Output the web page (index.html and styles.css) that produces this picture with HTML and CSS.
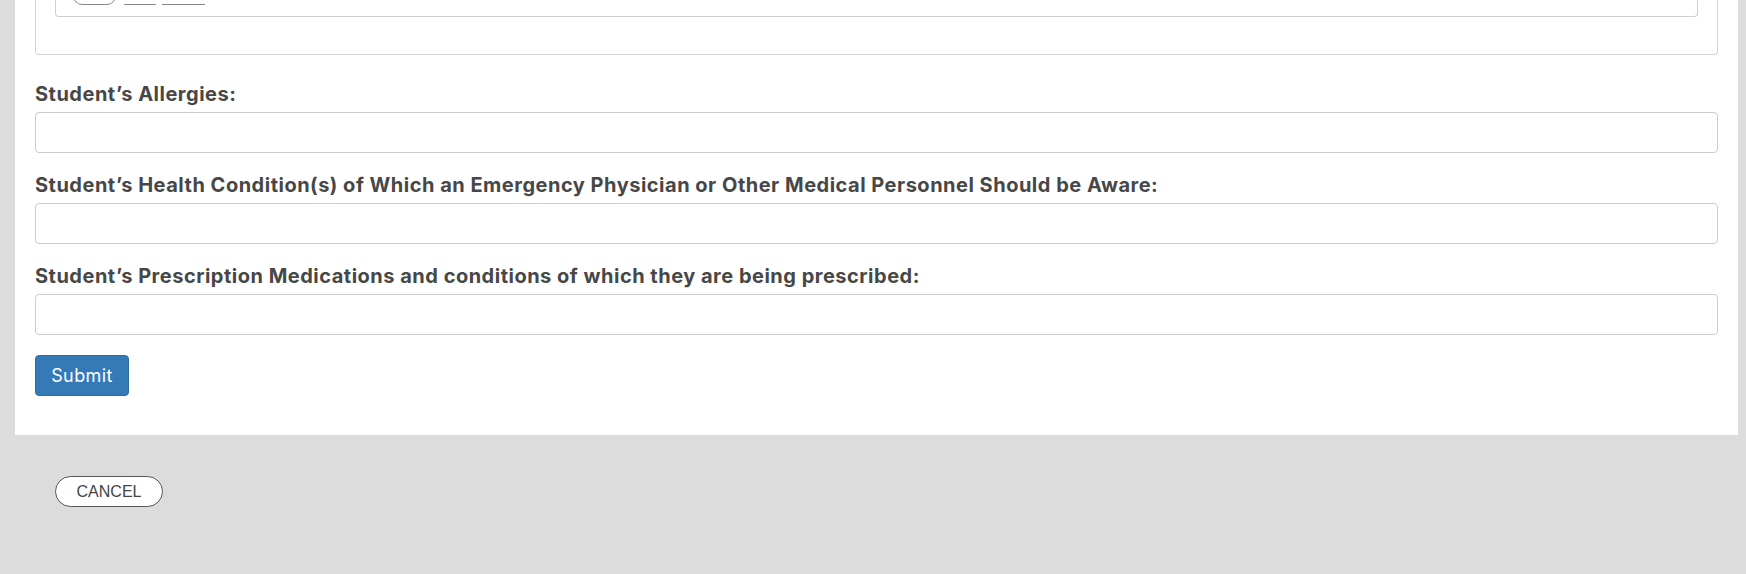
FILE: index.html
```html
<!DOCTYPE html>
<html lang="en">
<head>
<meta charset="utf-8">
<title>Student Medical Form</title>
<link rel="stylesheet" href="styles.css">
</head>
<body>
<div class="panel">
  <div class="card">
    <div class="inner">
      <div class="tools">
        <span class="pill"></span>
        <span class="uline w1"></span>
        <span class="uline w2"></span>
      </div>
    </div>
  </div>
  <form class="form">
    <div class="field">
      <label class="label">Student’s Allergies:</label>
      <input class="input" type="text">
    </div>
    <div class="field">
      <label class="label">Student’s Health Condition(s) of Which an Emergency Physician or Other Medical Personnel Should be Aware:</label>
      <input class="input" type="text">
    </div>
    <div class="field">
      <label class="label">Student’s Prescription Medications and conditions of which they are being prescribed:</label>
      <input class="input" type="text">
    </div>
    <button class="submit" type="button">Submit</button>
  </form>
</div>
<div class="footer">
  <button class="cancel" type="button">CANCEL</button>
</div>
</body>
</html>
```

FILE: styles.css
```css
html, body {
  margin: 0;
  padding: 0;
  background: #dcdcdc;
  height: 100%;
}
body {
  font-family: Inter, "Open Sans", sans-serif;
}
.panel {
  background: #fff;
  margin: 0 8px 0 15px;
  padding: 0 20px 39px;
}
.card {
  border: 1px solid #d3d3d3;
  border-top: none;
  border-radius: 0 0 4px 4px;
  padding: 0 19px 37px;
}
.inner {
  border: 1px solid #cfcfcf;
  border-top: none;
  border-radius: 0 0 4px 4px;
  padding: 0 17px 11px;
}
.tools {
  display: flex;
  align-items: flex-end;
  height: 5px;
}
.pill {
  width: 41px;
  height: 20px;
  border: 1px solid #8a8a8a;
  border-radius: 9px;
  flex: none;
}
.uline {
  height: 4px;
  border-bottom: 1px solid #8a8a8a;
  flex: none;
}
.w1 { width: 32px; margin-left: 8px; }
.w2 { width: 43px; margin-left: 6px; }
.form {
  margin-top: 29px;
}
.field {
  margin-bottom: 22px;
}
.label {
  display: block;
  font-weight: 700;
  font-size: 20px;
  line-height: 20px;
  letter-spacing: 0.5px;
  color: #474747;
  margin-bottom: 8px;
}
.input {
  display: block;
  box-sizing: border-box;
  width: 100%;
  height: 41px;
  border: 1px solid #ccc;
  border-radius: 4px;
  background: #fff;
  margin: 0;
}
.field:last-of-type {
  margin-bottom: 20px;
}
.submit {
  display: block;
  box-sizing: border-box;
  width: 94px;
  height: 41px;
  background: #337ab7;
  border: 1px solid #2e6da4;
  border-radius: 4px;
  color: #fff;
  font-family: Inter, sans-serif;
  font-size: 18px;
  letter-spacing: 0.4px;
  padding: 0;
}
.footer {
  padding: 41px 0 0 55px;
}
.cancel {
  display: block;
  box-sizing: border-box;
  width: 108px;
  height: 31px;
  background: #fff;
  border: 1px solid #555;
  border-radius: 16px;
  color: #444;
  font-family: "Liberation Sans", Arial, sans-serif;
  font-size: 16px;
  padding: 0;
}
```
